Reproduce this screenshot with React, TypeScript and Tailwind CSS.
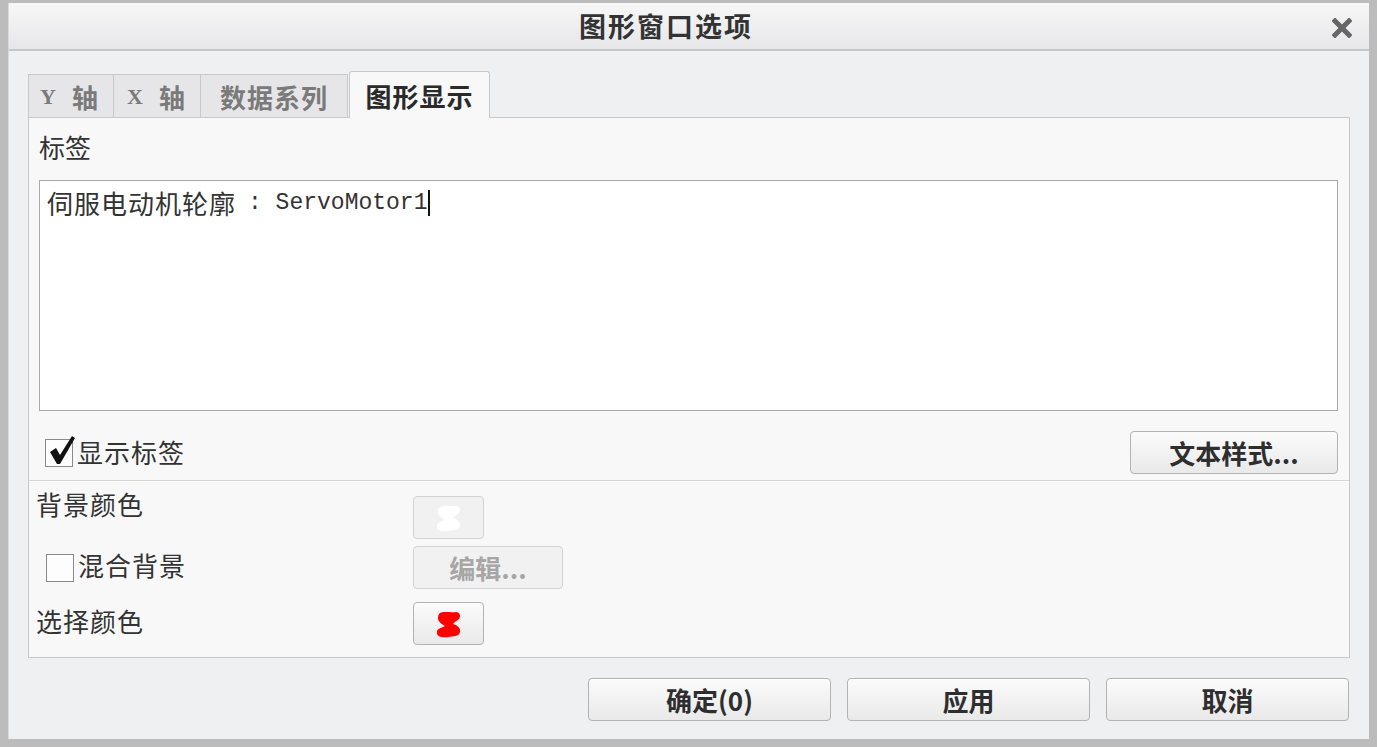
import React from "react";

const cjk = { fontFamily: '"Noto Sans CJK SC", "Liberation Sans", sans-serif' };

// Small colour swatch blob used inside the colour buttons
const ColorBlob = ({ color }: { color: string }) => (
  <svg width="30" height="30" viewBox="0 0 30 30">
    <path
      d="M6 4 C10 2 16 4 22 3 C26 3 27 7 25 10 C23 12 20 13 19 15 C23 16 27 19 26 23 C25 28 19 27 14 28 C9 29 3 28 3 24 C2 20 7 19 11 17 C8 15 4 13 4 9 C4 6 5 5 6 4 Z"
      fill={color}
    />
  </svg>
);

const Checkbox = ({ checked }: { checked?: boolean }) => (
  <div className="relative w-[28px] h-[28px] border border-[#8a8a8a] bg-[#fdfdfd] shrink-0">
    {checked && (
      <svg className="absolute left-[1px] top-[-6px]" width="30" height="32" viewBox="0 0 30 32">
        <path d="M3 18 L9 14 L13 21 L25 2 L28 4 L13 30 L10 30 Z" fill="#111" />
      </svg>
    )}
  </div>
);

const DialogButton = ({ label }: { label: string }) => (
  <button className="w-[243px] h-[43px] rounded-[4px] border border-[#b3b3b3] bg-gradient-to-b from-[#fbfbfb] to-[#e9e9ea] text-[26px] font-bold text-[#2e2e2e] flex items-center justify-center shadow-[inset_0_1px_0_#ffffff]">
    {label}
  </button>
);

export default function App() {
  return (
    <div
      className="w-[1377px] h-[747px] bg-[#bcbcbc] pt-[3px] px-[8px] pb-[8px] flex flex-col"
      style={cjk}
    >
      <div className="flex-1 bg-[#eff0f2] flex flex-col border-l border-[#d9d9d9]">
        {/* Title bar */}
        <div className="relative h-[48px] bg-gradient-to-b from-[#f7f7f8] to-[#e7e7e9] border-b-2 border-[#c6c6c8] flex items-center justify-center pr-[46px]">
          <span className="text-[27px] font-bold text-[#333] tracking-[2px]">图形窗口选项</span>
          <svg className="absolute right-[17px] top-[15px]" width="20" height="20" viewBox="0 0 20 20">
            <path d="M3 3 L17 17 M17 3 L3 17" stroke="#666" strokeWidth="5" strokeLinecap="square" />
          </svg>
        </div>

        <div className="flex-1 flex flex-col px-[19px] pt-[19px]">
          {/* Tabs */}
          <div className="flex items-end h-[47px]">
            <div className="h-[43px] w-[86px] flex items-center justify-center gap-[16px] border border-b-0 border-[#c8c8ca] bg-[#e6e6e8] text-[26px] font-bold text-[#7a7a7a] pr-[4px]">
              <span style={{ fontFamily: '"Liberation Serif", serif' }} className="text-[22px]">Y</span>
              <span>轴</span>
            </div>
            <div className="h-[43px] w-[87px] flex items-center justify-center gap-[16px] border border-b-0 border-l-0 border-[#c8c8ca] bg-[#e6e6e8] text-[26px] font-bold text-[#7a7a7a] pr-[2px]">
              <span style={{ fontFamily: '"Liberation Serif", serif' }} className="text-[22px]">X</span>
              <span>轴</span>
            </div>
            <div className="h-[43px] w-[147px] flex items-center justify-center border border-b-0 border-l-0 border-[#c8c8ca] bg-[#e6e6e8] text-[26px] font-bold text-[#7a7a7a] tracking-[1px]">
              数据系列
            </div>
            <div className="relative top-[1px] h-[47px] w-[141px] ml-[1px] flex items-center justify-center border border-b-0 border-[#c8c8ca] rounded-t-[3px] bg-[#f8f8f9] text-[26px] font-bold text-[#2a2a2a] tracking-[1px]">
              图形显示
            </div>
          </div>

          {/* Panel */}
          <div className="h-[541px] border border-[#c8c8ca] bg-[#f8f8f9] flex flex-col">
            <div className="pl-[10px] pr-[11px] pt-[11px]">
              <div className="text-[26px] text-[#333] leading-[36px]">标签</div>
              <div className="mt-[15px] h-[231px] bg-white border border-[#a9a9a9] px-[7px] pt-[4px]">
                <div className="flex items-center text-[26px] text-[#333] leading-[36px]">
                  <span className="tracking-[1px]">伺服电动机轮廓</span>
                  <span
                    className="text-[23px] ml-[12px] whitespace-pre"
                    style={{ fontFamily: '"Liberation Mono", monospace' }}
                  >
                    : ServoMotor1
                  </span>
                  <span className="inline-block w-[2px] h-[26px] bg-[#111] ml-[1px]" />
                </div>
              </div>
              <div className="mt-[20px] h-[43px] flex items-center justify-between">
                <div className="flex items-center gap-[4px] pl-[6px]">
                  <Checkbox checked />
                  <span className="text-[26px] text-[#333] tracking-[1px] -mt-[2px]">显示标签</span>
                </div>
                <button className="w-[208px] h-[43px] rounded-[4px] border border-[#b3b3b3] bg-gradient-to-b from-[#fbfbfb] to-[#e9e9ea] text-[26px] font-bold text-[#2e2e2e] flex items-center justify-center">
                  文本样式...
                </button>
              </div>
            </div>

            <div className="mt-[6px] border-t border-[#d6d6d8] border-b border-b-white" />

            <div className="flex-1 flex flex-col pl-[7px] pt-[14px] gap-[7px]">
              <div className="flex items-center h-[43px]">
                <span className="w-[377px] text-[26px] text-[#333] tracking-[1px] self-start -mt-[12px]">背景颜色</span>
                <div className="w-[71px] h-[43px] rounded-[4px] border border-[#d2d2d4] bg-[#f1f1f2] flex items-center justify-center">
                  <ColorBlob color="#ffffff" />
                </div>
              </div>
              <div className="flex items-center h-[43px]">
                <div className="w-[377px] flex items-center gap-[4px] pl-[10px]">
                  <Checkbox />
                  <span className="text-[26px] text-[#333] tracking-[1px] -mt-[6px]">混合背景</span>
                </div>
                <div className="w-[150px] h-[43px] rounded-[4px] border border-[#d2d2d4] bg-[#f1f1f2] flex items-center justify-center text-[26px] font-bold text-[#a6a6a6]">
                  编辑...
                </div>
              </div>
              <div className="flex items-center h-[43px] mt-[6px]">
                <span className="w-[377px] text-[26px] text-[#333] tracking-[1px] -mt-[6px]">选择颜色</span>
                <button className="w-[71px] h-[43px] rounded-[4px] border border-[#b3b3b3] bg-gradient-to-b from-[#fbfbfb] to-[#e9e9ea] flex items-center justify-center">
                  <ColorBlob color="#ff0000" />
                </button>
              </div>
            </div>
          </div>

          {/* Dialog buttons */}
          <div className="flex justify-end gap-[16px] pr-[1px] mt-[20px]">
            <DialogButton label="确定(0)" />
            <DialogButton label="应用" />
            <DialogButton label="取消" />
          </div>
        </div>
      </div>
    </div>
  );
}
